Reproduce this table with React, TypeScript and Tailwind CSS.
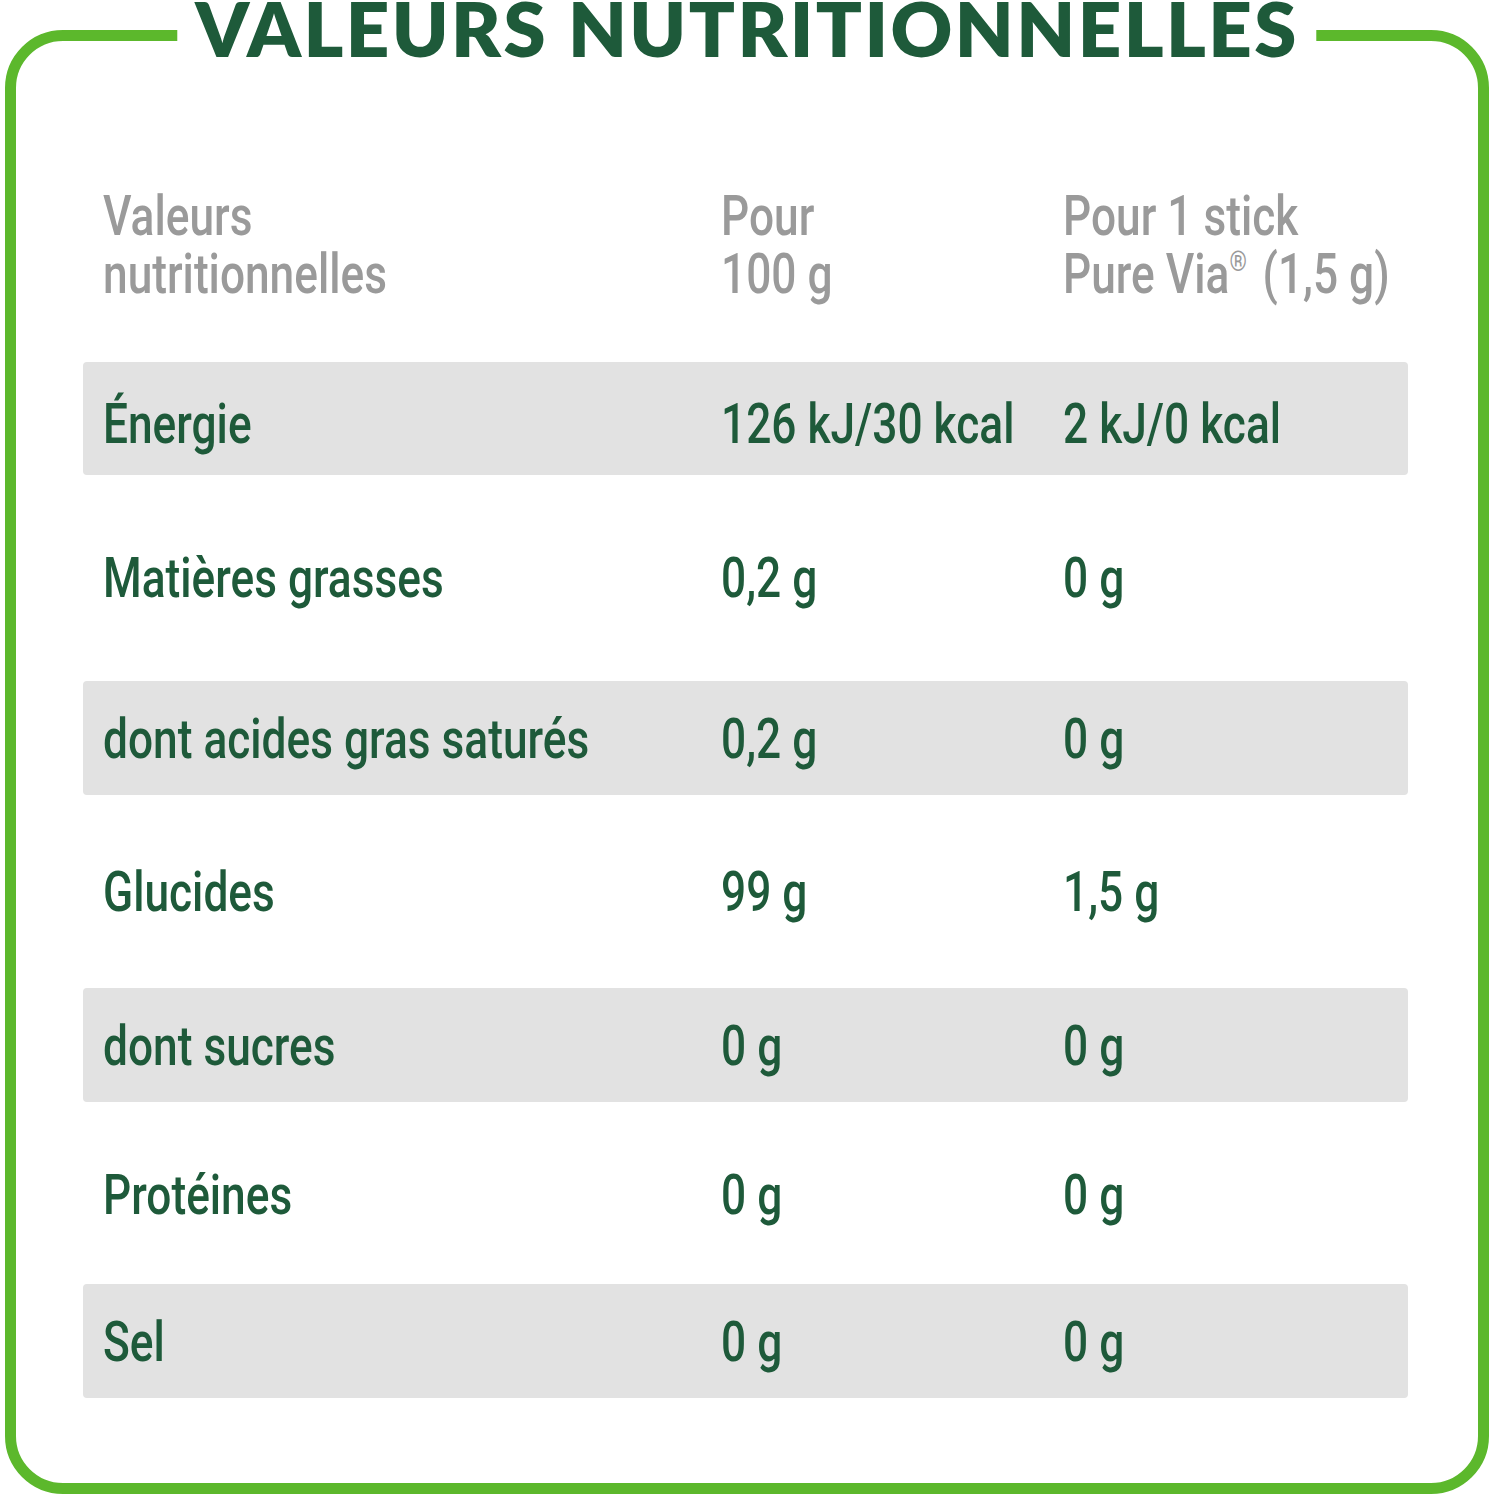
import React from "react";

const rows: { label: string; a: string; b: string; gray: boolean; h: string; pad: string }[] = [
  { label: "Énergie", a: "126 kJ/30 kcal", b: "2 kJ/0 kcal", gray: true, h: "h-[113px]", pad: "pt-[10px]" },
  { label: "Matières grasses", a: "0,2 g", b: "0 g", gray: false, h: "h-[206px]", pad: "pt-[0px]" },
  { label: "dont acides gras saturés", a: "0,2 g", b: "0 g", gray: true, h: "h-[114px]", pad: "pt-[2px]" },
  { label: "Glucides", a: "99 g", b: "1,5 g", gray: false, h: "h-[193px]", pad: "pt-[0px]" },
  { label: "dont sucres", a: "0 g", b: "0 g", gray: true, h: "h-[114px]", pad: "pt-[2px]" },
  { label: "Protéines", a: "0 g", b: "0 g", gray: false, h: "h-[182px]", pad: "pt-[4px]" },
  { label: "Sel", a: "0 g", b: "0 g", gray: true, h: "h-[114px]", pad: "pt-[2px]" },
];

function Cell({ children }: { children: React.ReactNode }) {
  return (
    <div className="whitespace-nowrap">
      <span className="inline-block origin-left scale-x-[0.79]">{children}</span>
    </div>
  );
}

export default function App() {
  return (
    <div className="w-[1493px] h-[1500px] bg-white pt-[30px] pl-[5px] pr-[4px]">
      <div className="relative h-[1464px] border-[11px] border-[#5cb82c] rounded-[58px]">
        <div className="absolute left-1/2 -translate-x-1/2 top-[-41px] bg-white px-[18px] whitespace-nowrap font-['Lato',sans-serif] font-extrabold text-[76px] leading-[56px] tracking-[2.4px] text-[#1e5a3a]">
          VALEURS NUTRITIONNELLES
        </div>
        <div className="pl-[67px] pr-[70px] font-['Roboto',sans-serif] font-medium">
          <div className="h-[321px] pt-[146px] pl-[20px] grid grid-cols-[618px_342px_1fr] text-[56px] leading-[58px] text-[#9a9a9a]">
            <Cell>
              Valeurs
              <br />
              nutritionnelles
            </Cell>
            <Cell>
              Pour
              <br />
              100 g
            </Cell>
            <Cell>
              Pour 1 stick
              <br />
              Pure Via<span className="text-[28px] font-normal relative -top-[22px] mr-[6px]">®</span> (1,5 g)
            </Cell>
          </div>
          {rows.map((r) => (
            <div
              key={r.label}
              className={`${r.h} pl-[20px] grid grid-cols-[618px_342px_1fr] items-center text-[56px] leading-[58px] text-[#1e5a3a] ${
                r.gray ? "bg-[#e2e2e2] rounded-[4px]" : ""
              }`}
            >
              <div className={r.pad}>
                <Cell>{r.label}</Cell>
              </div>
              <div className={r.pad}>
                <Cell>{r.a}</Cell>
              </div>
              <div className={r.pad}>
                <Cell>{r.b}</Cell>
              </div>
            </div>
          ))}
        </div>
      </div>
    </div>
  );
}
